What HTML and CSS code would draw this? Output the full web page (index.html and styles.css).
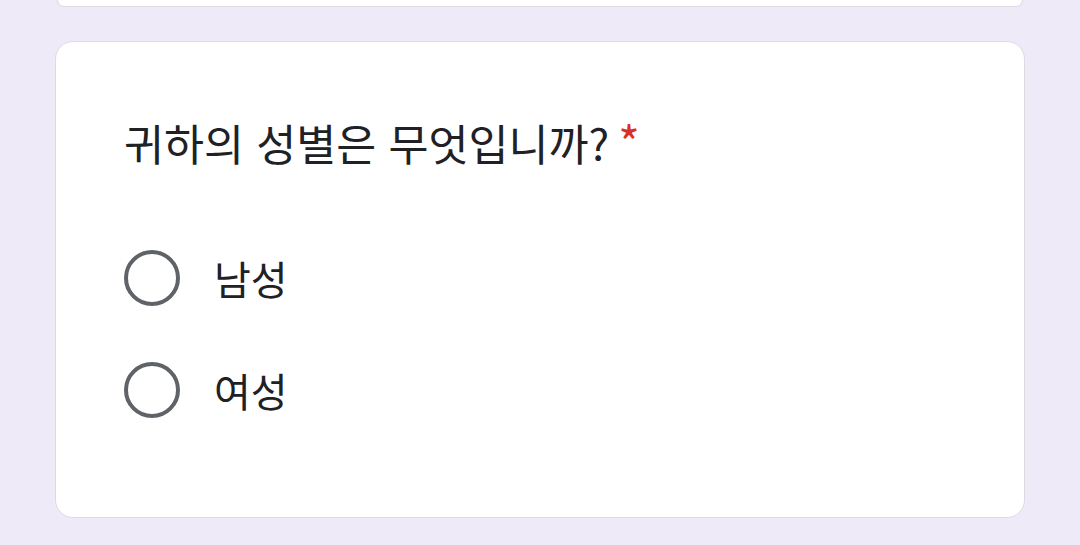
FILE: index.html
```html
<!DOCTYPE html>
<html lang="ko">
<head>
<meta charset="utf-8">
<link rel="stylesheet" href="styles.css">
</head>
<body>
<div class="page">
  <div class="card card-prev"></div>
  <div class="card card-main">
    <div class="question">귀하의 성별은 무엇입니까?<span class="req">*</span></div>
    <div class="options">
      <label class="option"><span class="radio"></span><span class="label">남성</span></label>
      <label class="option"><span class="radio"></span><span class="label">여성</span></label>
    </div>
  </div>
</div>
</body>
</html>
```
FILE: styles.css
```css
html, body {
  margin: 0;
  padding: 0;
  background: #eeeaf8;
}
body {
  width: 1080px;
  height: 545px;
  overflow: hidden;
  font-family: "Noto Sans CJK KR", "Noto Sans", sans-serif;
  color: #202124;
}
.page {
  padding: 0 55px;
  display: flex;
  flex-direction: column;
}
.card {
  background: #fff;
  border: 1.5px solid #dcdbe2;
  box-sizing: border-box;
}
.card-prev {
  height: 7px;
  border-top: none;
  border-radius: 0 0 16px 16px;
  margin: 0 2px;
}
.card-main {
  margin-top: 34px;
  height: 477px;
  border-radius: 18px;
  padding: 68px 68px 0;
}
.question {
  font-size: 43.5px;
  line-height: 62px;
  letter-spacing: 0;
}
.req {
  color: #d93025;
  margin-left: 9px;
  font-size: 46px;
}
.options {
  margin-top: 76px;
  display: flex;
  flex-direction: column;
  gap: 56px;
}
.option {
  display: flex;
  align-items: center;
  height: 56px;
}
.radio {
  width: 56px;
  height: 56px;
  box-sizing: border-box;
  border: 4px solid #5f6368;
  border-radius: 50%;
}
.label {
  margin-left: 34px;
  font-size: 40px;
}
```
